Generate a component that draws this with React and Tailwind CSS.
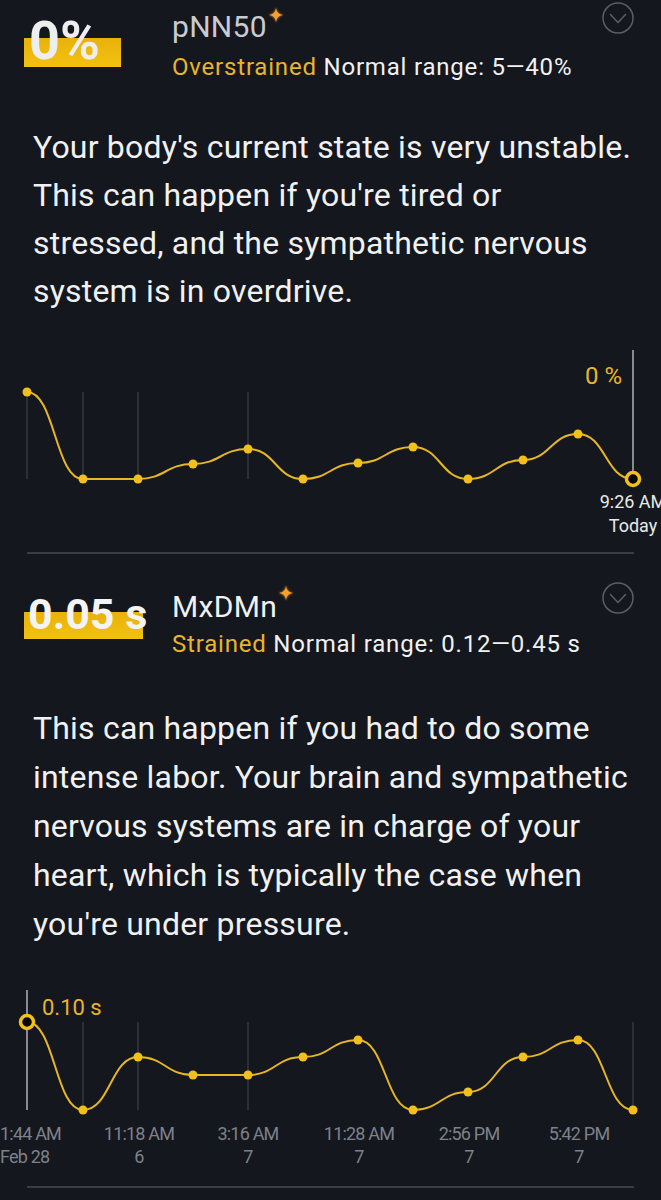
import React from 'react';

const XS = [27, 83, 138, 193, 248, 303, 358, 413, 468, 523, 578, 633];

// smooth line with flat tangents at every point
const buildPath = (pts) =>
  pts
    .map((p, i) => {
      if (i === 0) return `M${p[0]} ${p[1]}`;
      const [x0, y0] = pts[i - 1];
      const mx = (x0 + p[0]) / 2;
      return `C${mx} ${y0} ${mx} ${p[1]} ${p[0]} ${p[1]}`;
    })
    .join(' ');

const Sparkle = ({ className }) => (
  <svg viewBox="0 0 16 16" width="16" height="16" className={className}>
    <defs>
      <filter id="glow" x="-50%" y="-50%" width="200%" height="200%">
        <feGaussianBlur stdDeviation="0.8" />
      </filter>
    </defs>
    <path d="M8 0 Q8.8 7.2 16 8 Q8.8 8.8 8 16 Q7.2 8.8 0 8 Q7.2 7.2 8 0Z" fill="#f08a1c" filter="url(#glow)" opacity="0.7" />
    <path d="M8 1 Q8.7 7.3 15 8 Q8.7 8.7 8 15 Q7.3 8.7 1 8 Q7.3 7.3 8 1Z" fill="#f7a030" />
  </svg>
);

const Chevron = ({ className }) => (
  <svg viewBox="0 0 32 32" width="32" height="32" className={className}>
    <circle cx="16" cy="16" r="15" fill="none" stroke="#5b5e66" strokeWidth="1.5" />
    <path d="M8.5 12.5 L16 20.5 L23.5 12.5" fill="none" stroke="#5b5e66" strokeWidth="1.5" strokeLinecap="round" strokeLinejoin="round" />
  </svg>
);

const Chart = ({ top, height, ys, dimLines, brightLine, active, children }) => {
  const pts = XS.map((x, i) => [x, ys[i] - top]);
  return (
    <svg width="661" height={height} viewBox={`0 0 661 ${height}`} className="block">
      {dimLines.map(([x, y1, y2]) => (
        <line key={x} x1={x} x2={x} y1={y1 - top} y2={y2 - top} stroke="#3d4048" strokeWidth="1.2" />
      ))}
      <line x1={brightLine[0]} x2={brightLine[0]} y1={brightLine[1] - top} y2={brightLine[2] - top} stroke="#c9cacd" strokeWidth="1.3" />
      <path d={buildPath(pts)} fill="none" stroke="#e6b624" strokeWidth="2" />
      {pts.map(([x, y], i) =>
        i === active ? (
          <circle key={i} cx={x} cy={y} r="6.5" fill="#050505" stroke="#f2c01a" strokeWidth="3.5" />
        ) : (
          <circle key={i} cx={x} cy={y} r="4.5" fill="#f2c01a" />
        )
      )}
      <g transform={`translate(0 ${-top})`}>{children}</g>
    </svg>
  );
};

export default function App() {
  return (
    <div className="w-[661px] h-[1200px] overflow-hidden bg-[#14171e] font-['Roboto',sans-serif] text-[#f1f1f1]">
      {/* pNN50 */}
      <section>
        <div className="flex items-start pl-6 pr-[27px]">
          <div className="w-[148px] shrink-0 pt-[14px]">
            <div className="w-[97px] h-[53px] pl-[5px] text-[54px] leading-[53px] font-bold text-[#eeeeee] whitespace-nowrap bg-[linear-gradient(to_bottom,transparent_24px,#e9b10c_24px,#f3c10f)]">
              0%
            </div>
          </div>
          <div className="flex-1 pt-[11px]">
            <div className="flex items-start h-8 text-[30px] leading-8 tracking-[0.3px] text-[#c9cbd0]">
              pNN50
              <Sparkle className="ml-[1px] -mt-[4px]" />
            </div>
            <div className="mt-2 text-[24px] leading-8 tracking-[0.8px] whitespace-nowrap">
              <span className="text-[#e8b52c]">Overstrained</span> Normal range: 5—40%
            </div>
          </div>
          <Chevron className="mt-[2px] shrink-0" />
        </div>

        <p className="mt-[40px] pl-[33px] text-[32px] leading-[48px] tracking-[0.2px] whitespace-nowrap">
          Your body's current state is very unstable.<br />
          This can happen if you're tired or<br />
          stressed, and the sympathetic nervous<br />
          system is in overdrive.
        </p>

        <Chart
          top={315}
          height={235}
          ys={[392, 479, 479, 464, 449, 479, 463, 447, 479, 460, 434, 479]}
          dimLines={[[27, 392, 479], [83, 392, 479], [138, 392, 479], [248, 392, 479]]}
          brightLine={[633, 350, 479]}
          active={11}
        >
          <text x="622" y="384" textAnchor="end" fontSize="24" fill="#e8b52c">0 %</text>
          <text x="633" y="508" textAnchor="middle" fontSize="18" fill="#e9e9e9">9:26 AM</text>
          <text x="633" y="532" textAnchor="middle" fontSize="18" fill="#e9e9e9">Today</text>
        </Chart>
        <div className="mx-[27px] mt-[2px] h-[2px] bg-[#3a3d45]" />
      </section>

      {/* MxDMn */}
      <section>
        <div className="flex items-start pl-6 pr-[27px]">
          <div className="w-[148px] shrink-0 pt-[38px]">
            <div className="w-[119px] h-[47px] pl-[4px] text-[43px] leading-[44px] font-bold text-[#f4f4f4] whitespace-nowrap bg-[linear-gradient(to_bottom,transparent_20px,#e9b10c_20px,#f3c10f)]">
              0.05 s
            </div>
          </div>
          <div className="flex-1 pt-[37px]">
            <div className="flex items-start h-8 text-[30px] leading-8 tracking-[0.3px] text-[#f1f1f1]">
              MxDMn
              <Sparkle className="ml-[1px] -mt-[6px]" />
            </div>
            <div className="mt-[5px] text-[24px] leading-8 tracking-[0.8px] whitespace-nowrap">
              <span className="text-[#e8b52c]">Strained</span> Normal range: 0.12—0.45 s
            </div>
          </div>
          <Chevron className="mt-[28px] shrink-0" />
        </div>

        <p className="mt-[44px] pl-[33px] text-[32px] leading-[49px] tracking-[0.2px] whitespace-nowrap">
          This can happen if you had to do some<br />
          intense labor. Your brain and sympathetic<br />
          nervous systems are in charge of your<br />
          heart, which is typically the case when<br />
          you're under pressure.
        </p>

        <Chart
          top={949}
          height={235}
          ys={[1022, 1110, 1057, 1075, 1075, 1057, 1040, 1110, 1092, 1057, 1040, 1110]}
          dimLines={[[83, 1022, 1110], [138, 1022, 1110], [248, 1022, 1110], [633, 1022, 1110]]}
          brightLine={[27, 990, 1110]}
          active={0}
        >
          <text x="42" y="1015" fontSize="22" fill="#e8b52c">0.10 s</text>
          <g fontSize="18" fill="#7e8189" letterSpacing="-0.8">
            <text x="0" y="1140">1:44 AM</text>
            <text x="0" y="1163">Feb 28</text>
            {[
              [139, '11:18 AM', '6'],
              [248, '3:16 AM', '7'],
              [359, '11:28 AM', '7'],
              [469, '2:56 PM', '7'],
              [579, '5:42 PM', '7'],
            ].map(([x, t, d]) => (
              <g key={x}>
                <text x={x} y="1140" textAnchor="middle">{t}</text>
                <text x={x} y="1163" textAnchor="middle">{d}</text>
              </g>
            ))}
          </g>
        </Chart>
        <div className="mx-[27px] mt-[2px] h-[2px] bg-[#3a3d45]" />
      </section>
    </div>
  );
}
